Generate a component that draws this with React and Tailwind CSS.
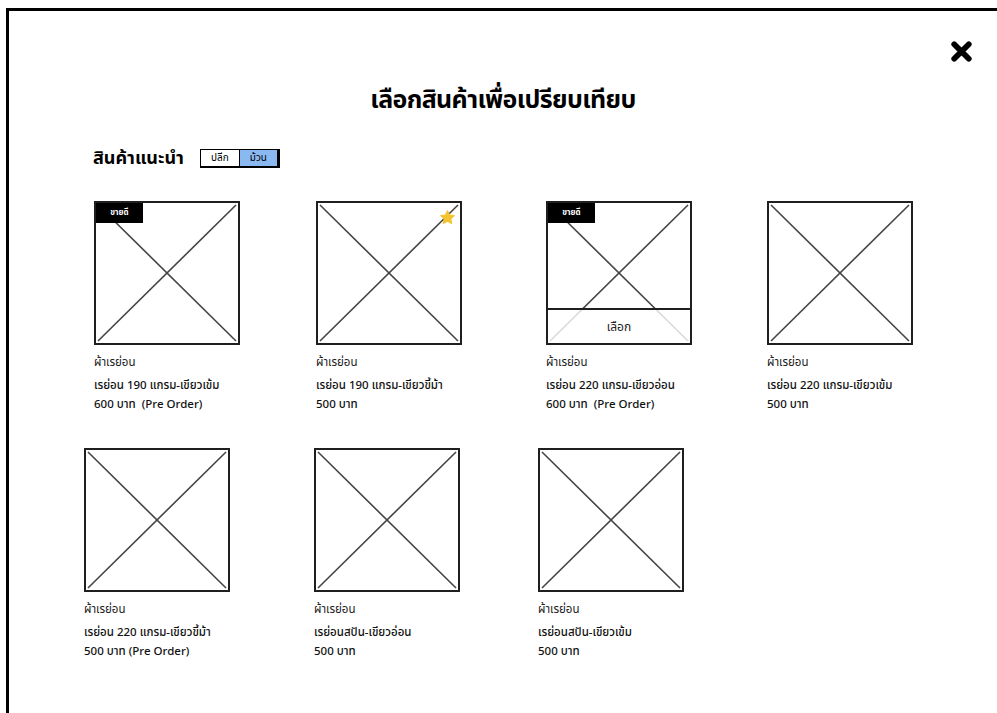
import React from 'react';

const products = [
  [
    { ml: 'ml-[85px]', name: 'ผ้าเรย่อน', spec: 'เรย่อน 190 แกรม-เขียวเข้ม', price: '600 บาท  (Pre Order)', badge: true },
    { ml: 'ml-[76px]', name: 'ผ้าเรย่อน', spec: 'เรย่อน 190 แกรม-เขียวขี้ม้า', price: '500 บาท', star: true },
    { ml: 'ml-[84px]', name: 'ผ้าเรย่อน', spec: 'เรย่อน 220 แกรม-เขียวอ่อน', price: '600 บาท  (Pre Order)', badge: true, select: true },
    { ml: 'ml-[75px]', name: 'ผ้าเรย่อน', spec: 'เรย่อน 220 แกรม-เขียวเข้ม', price: '500 บาท' },
  ],
  [
    { ml: 'ml-[75px]', name: 'ผ้าเรย่อน', spec: 'เรย่อน 220 แกรม-เขียวขี้ม้า', price: '500 บาท (Pre Order)' },
    { ml: 'ml-[84px]', name: 'ผ้าเรย่อน', spec: 'เรย่อนสปัน-เขียวอ่อน', price: '500 บาท' },
    { ml: 'ml-[78px]', name: 'ผ้าเรย่อน', spec: 'เรย่อนสปัน-เขียวเข้ม', price: '500 บาท' },
  ],
];

const Placeholder = ({ badge, star, select }) => (
  <div className="relative w-[146px] h-[144px] border-2 border-[#1f1f1f] bg-white">
    <svg className="absolute inset-0 w-full h-full" viewBox="0 0 142 140" preserveAspectRatio="none">
      <line x1="2" y1="2" x2="140" y2="138" stroke="#444" strokeWidth="1.6" />
      <line x1="140" y1="2" x2="2" y2="138" stroke="#444" strokeWidth="1.6" />
    </svg>
    {badge && (
      <div className="absolute left-0 top-0 w-[47px] h-[20px] bg-black text-white text-[8px] font-bold flex items-center justify-center">
        ขายดี
      </div>
    )}
    {star && (
      <svg className="absolute right-[4px] top-[6px]" width="17" height="17" viewBox="0 0 24 24">
        <path
          d="M12 2.5l2.9 6 6.6.8-4.8 4.6 1.2 6.5L12 17.3l-5.9 3.1 1.2-6.5-4.8-4.6 6.6-.8z"
          fill="#f4c430"
          stroke="#f4c430"
          strokeLinejoin="round"
          strokeWidth="1.5"
        />
      </svg>
    )}
    {select && (
      <div className="absolute left-0 right-0 bottom-0 h-[35px] bg-white/80 border-t-2 border-[#1f1f1f] flex items-center justify-center text-[12px] text-[#222]">
        เลือก
      </div>
    )}
  </div>
);

export default function App() {
  return (
    <div
      className="w-[997px] h-[713px] overflow-hidden bg-white pl-[6px] pt-[8px]"
      style={{ fontFamily: '"Noto Sans Thai", "Noto Sans", "Liberation Sans", sans-serif' }}
    >
      <div className="w-[1000px] h-[720px] border-l-[3px] border-t-[3px] border-black relative">
        <div className="flex justify-center w-[988px] pt-[77px]">
          <h1 className="text-[25px] font-bold text-black leading-none tracking-tight">เลือกสินค้าเพื่อเปรียบเทียบ</h1>
        </div>
        <button className="absolute left-[940px] top-[28px] w-[25px] h-[25px]">
          <svg width="25" height="25" viewBox="0 0 24 24">
            <path d="M5 5L19 19M19 5L5 19" stroke="#000" strokeWidth="5.5" strokeLinecap="round" />
          </svg>
        </button>

        <div className="flex items-center mt-[36px] ml-[84px]">
          <span className="text-[18px] font-bold text-black leading-none">สินค้าแนะนำ</span>
          <div className="ml-[16px] flex h-[19px] border border-black border-r-[3px] border-b-[2px] text-[10px] leading-none">
            <span className="w-[38px] flex items-center justify-center bg-white">ปลีก</span>
            <span className="w-[38px] flex items-center justify-center bg-[#8ab8f0] border-l border-black">ม้วน</span>
          </div>
        </div>

        {products.map((row, r) => (
          <div key={r} className={`flex ${r === 0 ? 'mt-[33px]' : 'mt-[34px]'}`}>
            {row.map((p, i) => (
              <div key={i} className={`${p.ml} w-[160px] shrink-0 -mr-[14px]`}>
                <Placeholder badge={p.badge} star={p.star} select={p.select} />
                <div className="mt-[10px] text-[11.5px] text-[#222] leading-[16px]">{p.name}</div>
                <div className="mt-[5px] text-[11.5px] text-[#111] font-medium leading-[19px] whitespace-pre">{p.spec}</div>
                <div className="text-[11.5px] text-[#111] font-medium leading-[19px] whitespace-pre">{p.price}</div>
              </div>
            ))}
          </div>
        ))}
      </div>
    </div>
  );
}
